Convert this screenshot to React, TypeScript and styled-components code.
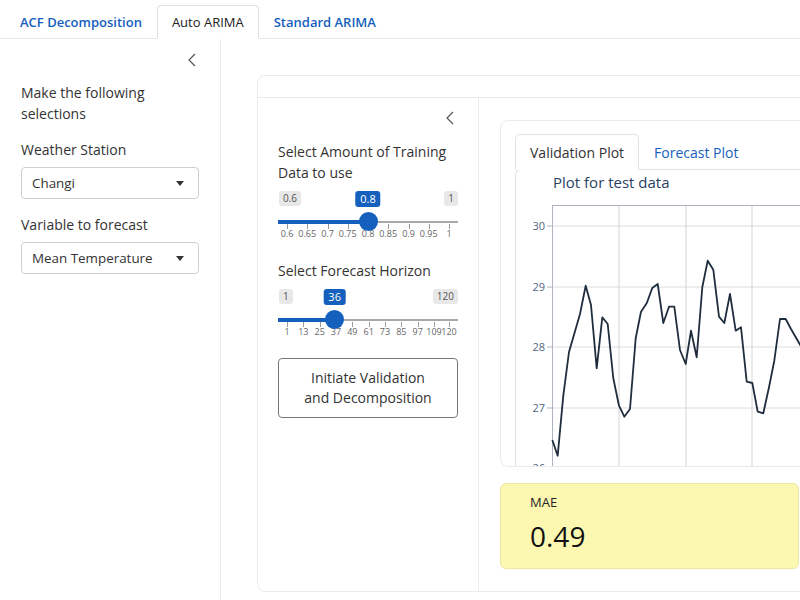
import React from 'react'
import styled, { createGlobalStyle } from 'styled-components'

const BLUE = '#1560bd'

const GlobalStyle = createGlobalStyle`
  html, body {
    margin: 0;
    padding: 0;
    width: 800px;
    height: 600px;
    overflow: hidden;
    background: #fff;
  }
  body {
    font-family: "Open Sans", "Liberation Sans", sans-serif;
    color: #212529;
  }
  * { box-sizing: border-box; }
`

const NavBar = styled.nav`
  display: flex;
  align-items: flex-end;
  height: 39px;
  padding-left: 5px;
  border-bottom: 1px solid #e6e9ec;
`

const NavTab = styled.div<{ $active?: boolean }>`
  height: 34px;
  padding: 0 14px;
  margin-bottom: -1px;
  display: flex;
  align-items: center;
  font-size: 13px;
  font-weight: ${p => (p.$active ? 400 : 600)};
  color: ${p => (p.$active ? '#222' : BLUE)};
  background: ${p => (p.$active ? '#fff' : 'transparent')};
  border: 1px solid ${p => (p.$active ? '#dee2e6' : 'transparent')};
  border-bottom-color: ${p => (p.$active ? '#fff' : 'transparent')};
  border-radius: 4px 4px 0 0;
`

const Layout = styled.div`
  display: flex;
  height: 561px;
`

const Sidebar = styled.aside`
  width: 221px;
  flex-shrink: 0;
  border-right: 1px solid #ececec;
  padding: 11px 21px 0 21px;
`

const ToggleRow = styled.div<{ $right: number }>`
  display: flex;
  justify-content: flex-end;
  align-items: center;
  height: 20px;
  padding-right: ${p => p.$right}px;
`

const Heading = styled.div`
  margin-top: 12px;
  font-size: 14px;
  line-height: 21px;
  color: #333;
`

const Field = styled.div`
  margin-top: 15px;
`

const Label = styled.div`
  font-size: 14px;
  line-height: 21px;
  color: #333;
`

const Select = styled.div`
  margin-top: 7px;
  height: 32px;
  border: 1px solid #cfcfcf;
  border-radius: 4px;
  padding: 0 14px 0 10px;
  display: flex;
  align-items: center;
  justify-content: space-between;
  font-size: 13.4px;
  color: #333;
`

const Caret = styled.span`
  width: 0;
  height: 0;
  border-left: 4px solid transparent;
  border-right: 4px solid transparent;
  border-top: 5px solid #333;
`

const Main = styled.main`
  flex: 1;
  padding: 36px 0 0 36px;
  overflow: hidden;
`

const Card = styled.section`
  width: 585px;
  border: 1px solid #e9ecef;
  border-radius: 8px;
  display: flex;
  flex-direction: column;
`

const CardHeader = styled.div`
  height: 22px;
  border-bottom: 1px solid #e9ecef;
`

const CardBody = styled.div`
  display: flex;
`

const InnerSidebar = styled.div`
  width: 221px;
  flex-shrink: 0;
  border-right: 1px solid #ececec;
  padding: 10px 20px 0 20px;
`

const SliderGroup = styled.div<{ $gap: number }>`
  margin-top: ${p => p.$gap}px;
`

const SliderBox = styled.div`
  position: relative;
  margin-top: 8px;
  height: 50px;
`

const EdgeLabel = styled.span<{ $side: 'left' | 'right' }>`
  position: absolute;
  top: 0;
  ${p => (p.$side === 'left' ? 'left: 1px;' : 'right: 0;')}
  height: 15px;
  line-height: 15px;
  padding: 0 4px;
  font-size: 10px;
  color: #555;
  background: #e8e8e8;
  border-radius: 3px;
`

const ValueLabel = styled.span`
  position: absolute;
  top: 0;
  transform: translateX(-50%);
  height: 16px;
  line-height: 16px;
  padding: 0 5px;
  font-size: 11px;
  color: #fff;
  background: ${BLUE};
  border-radius: 3px;
`

const Track = styled.div`
  position: absolute;
  left: 0;
  right: 0;
  top: 30px;
  height: 2px;
  background: #a8a8a8;
`

const Fill = styled.div`
  position: absolute;
  left: 0;
  top: 29px;
  height: 4px;
  background: ${BLUE};
`

const Thumb = styled.div`
  position: absolute;
  top: 21px;
  width: 19px;
  height: 19px;
  margin-left: -9.5px;
  border-radius: 50%;
  background: ${BLUE};
`

const TickMark = styled.span`
  position: absolute;
  top: 33px;
  width: 1px;
  height: 5px;
  background: #999;
`

const TickText = styled.span`
  position: absolute;
  top: 37px;
  transform: translateX(-50%);
  font-size: 9px;
  line-height: 12px;
  color: #666;
  white-space: nowrap;
`

const ActionButton = styled.button`
  margin-top: 19px;
  width: 100%;
  height: 60px;
  background: #fff;
  border: 1px solid #777;
  border-radius: 4px;
  font-family: inherit;
  font-size: 14px;
  line-height: 20px;
  color: #333;
`

const RightCol = styled.div`
  flex: 1;
  padding: 22px 21px 22px 21px;
  display: flex;
  flex-direction: column;
  gap: 16px;
`

const PlotCard = styled.div`
  height: 347px;
  flex-shrink: 0;
  border: 1px solid #e9ecef;
  border-radius: 8px;
  overflow: hidden;
  padding: 13px 0 0 14px;
  display: flex;
  flex-direction: column;
`

const PlotTabs = styled.div`
  display: flex;
  height: 36px;
  flex-shrink: 0;
  position: relative;
  z-index: 1;
  margin-bottom: -1px;
`

const PlotTab = styled.div<{ $active?: boolean }>`
  padding: 0 14px;
  display: flex;
  align-items: center;
  font-size: 14px;
  color: ${p => (p.$active ? '#333' : BLUE)};
  background: ${p => (p.$active ? '#fff' : 'transparent')};
  border: 1px solid ${p => (p.$active ? '#dee2e6' : 'transparent')};
  border-bottom-color: ${p => (p.$active ? '#fff' : 'transparent')};
  border-radius: 5px 5px 0 0;
`

const PlotPanel = styled.div`
  flex: 1 0 auto;
  border: 1px solid #dee2e6;
  border-right: none;
  border-radius: 6px 0 0 0;
  display: flex;
  flex-direction: column;
`

const PlotTitle = styled.div`
  height: 29px;
  flex-shrink: 0;
  padding-left: 37px;
  font-size: 15px;
  line-height: 25px;
  color: #2a3f5f;
`

const ChartSvg = styled.svg`
  display: block;
  flex-shrink: 0;
`

const ValueBox = styled.div`
  width: 299px;
  height: 86px;
  flex-shrink: 0;
  background: #fdf8b1;
  border: 1px solid #eee6a4;
  border-radius: 6px;
  padding: 9px 29px;
`

const ValueTitle = styled.div`
  font-size: 13px;
  line-height: 18px;
  color: #222;
`

const ValueNumber = styled.div`
  margin-top: 7px;
  font-size: 28px;
  line-height: 36px;
  color: #111;
`

const Chevron = () => (
  <svg width="8" height="14" viewBox="0 0 8 14">
    <polyline points="7,1 1,7 7,13" fill="none" stroke="#555" strokeWidth="1.2" />
  </svg>
)

type Tick = { label: string; frac: number }

const pos = (frac: number) => `calc(9px + ${frac} * (100% - 18px))`

const RangeSlider: React.FC<{ min: string; max: string; value: string; frac: number; ticks: Tick[] }> = ({
  min,
  max,
  value,
  frac,
  ticks,
}) => (
  <SliderBox>
    <EdgeLabel $side="left">{min}</EdgeLabel>
    <EdgeLabel $side="right">{max}</EdgeLabel>
    <ValueLabel style={{ left: pos(frac) }}>{value}</ValueLabel>
    <Track />
    <Fill style={{ width: pos(frac) }} />
    {ticks.map(t => (
      <React.Fragment key={t.label}>
        <TickMark style={{ left: pos(t.frac) }} />
        <TickText style={{ left: pos(t.frac) }}>{t.label}</TickText>
      </React.Fragment>
    ))}
    <Thumb style={{ left: pos(frac) }} />
  </SliderBox>
)

const trainTicks: Tick[] = ['0.6', '0.65', '0.7', '0.75', '0.8', '0.85', '0.9', '0.95', '1'].map((label, i) => ({
  label,
  frac: i / 8,
}))

const horizonTicks: Tick[] = [1, 13, 25, 37, 49, 61, 73, 85, 97, 109, 120].map(v => ({
  label: String(v),
  frac: (v - 1) / 119,
}))

// traced from the validation plot, page coordinates
const series: [number, number][] = [
  [552.3, 441], [557.7, 456.7], [563.3, 396.7], [569, 353], [580, 315], [585.7, 286.7], [591, 306],
  [596.7, 369.3], [602.3, 318.3], [607.7, 325], [613.3, 379.3], [619, 406.7], [624.3, 417.7],
  [630, 410], [635.7, 339.3], [641, 312.7], [646.7, 304.3], [652.3, 289], [657.7, 285],
  [663.3, 324], [669, 307.7], [674.3, 307.7], [680, 351], [685.7, 365], [691, 331.7],
  [696.7, 358.3], [702.3, 288.3], [707.7, 261.7], [713.3, 270.7], [719, 317.7], [724.3, 324],
  [730, 295], [735.7, 331.7], [741, 328.3], [746.7, 382.7], [752.3, 384], [757.7, 412.7],
  [763.3, 414.3], [769, 388.3], [774.3, 361.7], [780, 320], [785.7, 320], [791, 330], [806, 356],
]

const OX = 516
const OY = 200

const PlotChart = () => {
  const yTicks = [
    { v: '30', y: 227 },
    { v: '29', y: 288 },
    { v: '28', y: 348 },
    { v: '27', y: 409 },
    { v: '26', y: 469 },
  ]
  const xGrid = [619, 686, 752]
  return (
    <ChartSvg width="300" height="280">
      {yTicks.map(t => (
        <g key={t.v}>
          <line x1={36} x2={300} y1={t.y - OY} y2={t.y - OY} stroke="#dcdcdc" strokeWidth="1" />
          <line x1={31} x2={36} y1={t.y - OY} y2={t.y - OY} stroke="#aeb4be" strokeWidth="1" />
          <text
            x={29}
            y={t.y - OY + 4}
            textAnchor="end"
            fontSize="11"
            fill="#506784"
            fontFamily='"Open Sans", sans-serif'
          >
            {t.v}
          </text>
        </g>
      ))}
      {xGrid.map(x => (
        <line key={x} x1={x - OX} x2={x - OX} y1={6} y2={280} stroke="#d4d4d4" strokeWidth="1" />
      ))}
      <line x1={36.5} x2={36.5} y1={6} y2={280} stroke="#aeb4be" strokeWidth="1" />
      <line x1={36} x2={300} y1={6.5} y2={6.5} stroke="#aeb4be" strokeWidth="1" />
      <polyline
        points={series.map(([x, y]) => `${x - OX},${y - OY}`).join(' ')}
        fill="none"
        stroke="#1f2d3d"
        strokeWidth="1.8"
        strokeLinejoin="round"
      />
    </ChartSvg>
  )
}

const App: React.FC = () => {
  return (
    <>
      <GlobalStyle />
      <NavBar>
        <NavTab>ACF Decomposition</NavTab>
        <NavTab $active>Auto ARIMA</NavTab>
        <NavTab>Standard ARIMA</NavTab>
      </NavBar>
      <Layout>
        <Sidebar>
          <ToggleRow $right={3}>
            <Chevron />
          </ToggleRow>
          <Heading>Make the following selections</Heading>
          <Field>
            <Label>Weather Station</Label>
            <Select>
              Changi
              <Caret />
            </Select>
          </Field>
          <Field>
            <Label>Variable to forecast</Label>
            <Select>
              Mean Temperature
              <Caret />
            </Select>
          </Field>
        </Sidebar>
        <Main>
          <Card>
            <CardHeader />
            <CardBody>
              <InnerSidebar>
                <ToggleRow $right={4}>
                  <Chevron />
                </ToggleRow>
                <SliderGroup $gap={13}>
                  <Label>Select Amount of Training Data to use</Label>
                  <RangeSlider min="0.6" max="1" value="0.8" frac={0.5} ticks={trainTicks} />
                </SliderGroup>
                <SliderGroup $gap={19}>
                  <Label>Select Forecast Horizon</Label>
                  <RangeSlider min="1" max="120" value="36" frac={35 / 119} ticks={horizonTicks} />
                </SliderGroup>
                <ActionButton>
                  Initiate Validation
                  <br />
                  and Decomposition
                </ActionButton>
              </InnerSidebar>
              <RightCol>
                <PlotCard>
                  <PlotTabs>
                    <PlotTab $active>Validation Plot</PlotTab>
                    <PlotTab>Forecast Plot</PlotTab>
                  </PlotTabs>
                  <PlotPanel>
                    <PlotTitle>Plot for test data</PlotTitle>
                    <PlotChart />
                  </PlotPanel>
                </PlotCard>
                <ValueBox>
                  <ValueTitle>MAE</ValueTitle>
                  <ValueNumber>0.49</ValueNumber>
                </ValueBox>
              </RightCol>
            </CardBody>
          </Card>
        </Main>
      </Layout>
    </>
  )
}

export default App
